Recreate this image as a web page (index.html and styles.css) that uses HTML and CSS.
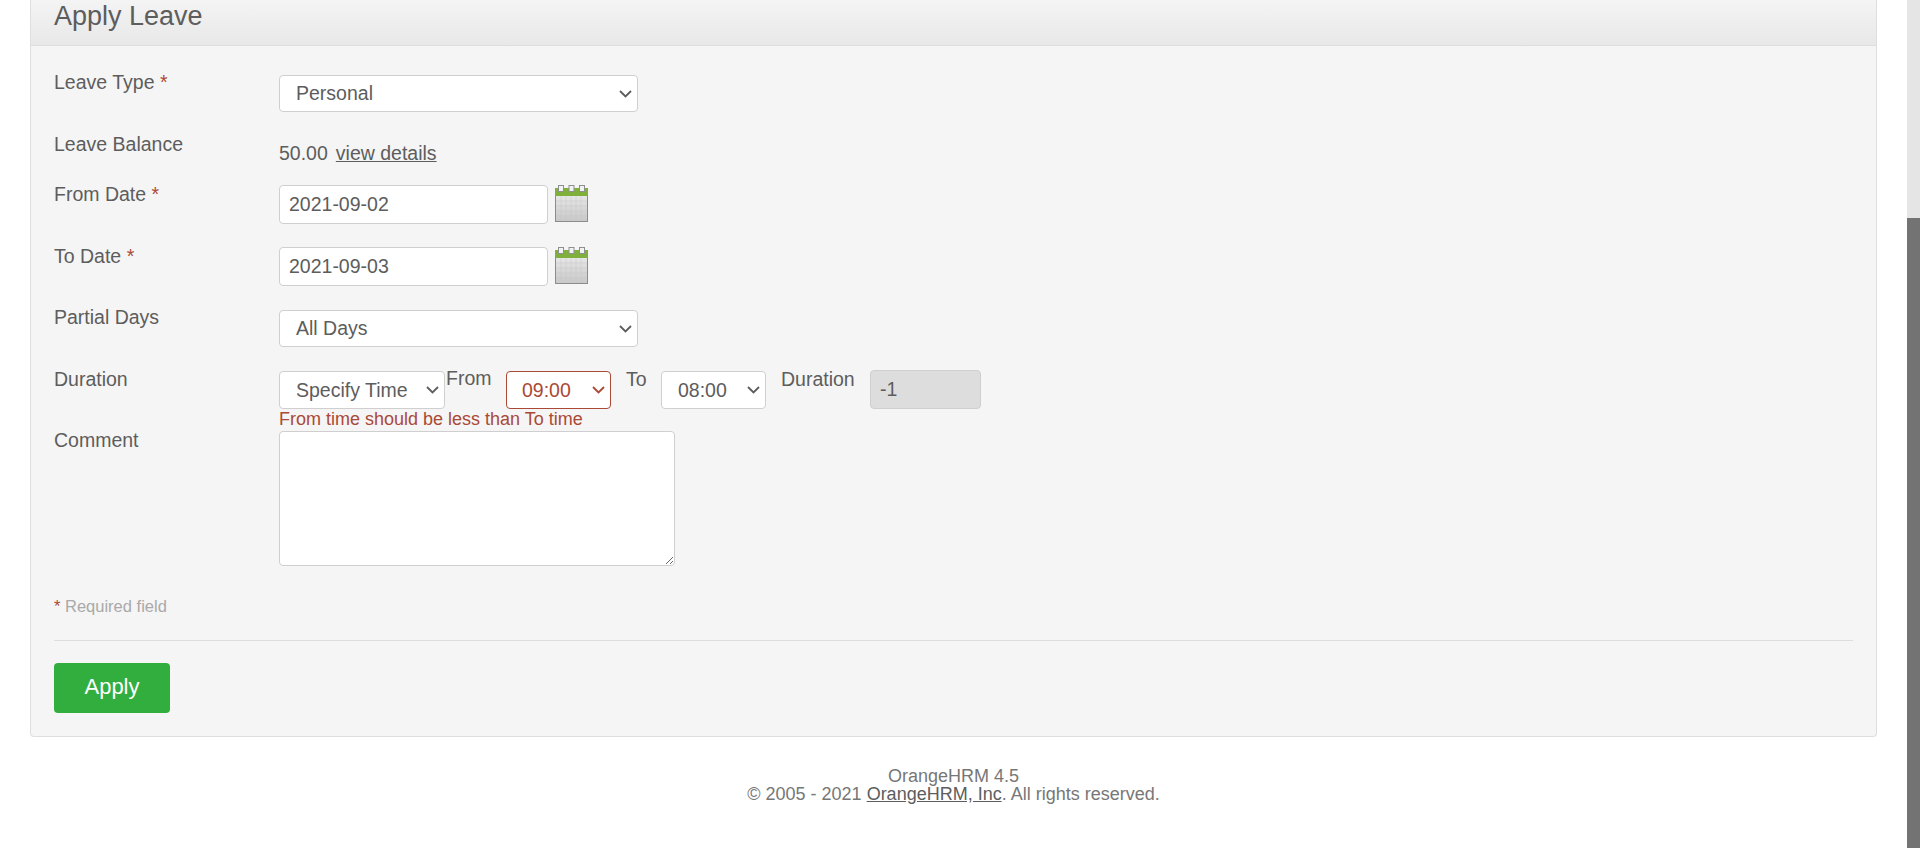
FILE: index.html
```html
<!DOCTYPE html>
<html>
<head>
	<meta charset="UTF-8">
	<title>Apply Leave</title>
	<link rel="stylesheet" href="styles.css">
</head>
<body>
	<div class="page">
		<div class="content">
			<div class="card">
				<div class="card-head">
					<h1>Apply Leave</h1>
				</div>
				<form class="card-body">
					<div class="form-grid">
						<label class="field-label">Leave Type <em>*</em></label>
						<div class="control control-select">
							<select class="input wide">
								<option>Personal</option>
							</select>
						</div>

						<label class="field-label">Leave Balance</label>
						<div class="control control-balance">
							<span class="balance">50.00</span>
							<a href="#" class="link">view details</a>
						</div>

						<label class="field-label">From Date <em>*</em></label>
						<div class="control control-date">
							<input class="input date" type="text" value="2021-09-02">
							<svg class="cal" viewBox="0 0 33 37">
								<defs>
									<linearGradient id="calBody" x1="0" y1="0" x2="0" y2="1">
										<stop offset="0" stop-color="#efefef"/>
										<stop offset="1" stop-color="#c8c8c8"/>
									</linearGradient>
								</defs>
								<rect x="0.5" y="3.5" width="32" height="33" fill="url(#calBody)" stroke="#8c8c8c"/>
								<rect x="0" y="3" width="33" height="8" fill="#7fb03c"/>
								<path d="M1 16h31M1 21h31M1 26h31M1 31h31M6 11v25M11 11v25M16 11v25M21 11v25M26 11v25" stroke="#c4c4c4" stroke-opacity="0.45" fill="none"/>
								<rect x="3.5" y="0.5" width="5" height="6" fill="#f2f2f2" stroke="#8f8f8f"/>
								<rect x="14" y="0.5" width="5" height="6" fill="#f2f2f2" stroke="#8f8f8f"/>
								<rect x="24.5" y="0.5" width="5" height="6" fill="#f2f2f2" stroke="#8f8f8f"/>
							</svg>
						</div>

						<label class="field-label">To Date <em>*</em></label>
						<div class="control control-date">
							<input class="input date" type="text" value="2021-09-03">
							<svg class="cal" viewBox="0 0 33 37">
								<rect x="0.5" y="3.5" width="32" height="33" fill="url(#calBody)" stroke="#8c8c8c"/>
								<rect x="0" y="3" width="33" height="8" fill="#7fb03c"/>
								<path d="M1 16h31M1 21h31M1 26h31M1 31h31M6 11v25M11 11v25M16 11v25M21 11v25M26 11v25" stroke="#c4c4c4" stroke-opacity="0.45" fill="none"/>
								<rect x="3.5" y="0.5" width="5" height="6" fill="#f2f2f2" stroke="#8f8f8f"/>
								<rect x="14" y="0.5" width="5" height="6" fill="#f2f2f2" stroke="#8f8f8f"/>
								<rect x="24.5" y="0.5" width="5" height="6" fill="#f2f2f2" stroke="#8f8f8f"/>
							</svg>
						</div>

						<label class="field-label">Partial Days</label>
						<div class="control control-select">
							<select class="input wide">
								<option>All Days</option>
							</select>
						</div>

						<label class="field-label">Duration</label>
						<div class="control">
							<div class="duration-row">
								<select class="input duration-type">
									<option>Specify Time</option>
								</select>
								<span class="inline-label from-label">From</span>
								<select class="input time time-bad">
									<option>09:00</option>
								</select>
								<span class="inline-label to-label">To</span>
								<select class="input time">
									<option>08:00</option>
								</select>
								<span class="inline-label total-label">Duration</span>
								<input class="input total" type="text" value="-1" readonly>
							</div>
							<div class="error">From time should be less than To time</div>
						</div>

						<label class="field-label">Comment</label>
						<div class="control control-comment">
							<textarea class="input comment"></textarea>
						</div>
					</div>

					<p class="required"><em>*</em> Required field</p>
					<hr class="divider">
					<button type="button" class="apply">Apply</button>
				</form>
			</div>

			<div class="footer">
				<div>OrangeHRM 4.5</div>
				<div>© 2005 - 2021 <a href="#" class="link">OrangeHRM, Inc</a>. All rights reserved.</div>
			</div>
		</div>

		<div class="scrollbar">
			<div class="scrollbar-thumb"></div>
		</div>
	</div>
</body>
</html>
```

FILE: styles.css
```css
html, body { margin: 0; height: 100%; overflow: hidden; background: #fff; }
body { font-family: "Liberation Sans", Arial, sans-serif; font-size: 19.5px; color: #5d5d5d; }

.page { display: flex; height: 848px; }
.content { flex: 1; padding: 0 30px; min-width: 0; }

.scrollbar { width: 13px; background: #e5e5e5; padding-top: 218px; box-sizing: border-box; }
.scrollbar-thumb { height: 100%; background: #737373; }

.card { background: #f5f5f5; border: 1px solid #dedede; border-top: 0; border-radius: 0 0 4px 4px; }
.card-head { height: 46px; box-sizing: border-box; padding: 0 23px; background: linear-gradient(#f4f4f4, #e8e8e8); border-bottom: 1px solid #dedede; }
.card-head h1 { margin: 0; font-size: 27px; font-weight: normal; line-height: 32px; color: #5d5d5d; }
.card-body { padding: 25px 23px 23px; }

.form-grid { display: grid; grid-template-columns: 225px 1fr; grid-template-rows: 62px 50px 62px 61px 62px 61px auto; }
.field-label { line-height: 22px; }
.field-label em, .required em { font-style: normal; color: #aa4935; }

.input { box-sizing: border-box; font-family: inherit; font-size: 19.5px; color: #5d5d5d; background-color: #fff; border: 1px solid #cfcfcf; border-radius: 4px; margin: 0; }
select.input {
	appearance: none;
	padding: 0 24px 0 16px;
	background-image: url("data:image/svg+xml,%3Csvg xmlns='http://www.w3.org/2000/svg' width='13' height='8'%3E%3Cpath d='M1 1l5.5 5.5L12 1' fill='none' stroke='%235d5d5d' stroke-width='1.8'/%3E%3C/svg%3E");
	background-repeat: no-repeat;
	background-position: right 5px center;
}
input.input { padding: 0 9px; }

.control-select { padding-top: 4px; }
.control-date { padding-top: 2px; display: flex; align-items: flex-start; gap: 8px; }
.control-balance { padding-top: 9px; line-height: 22px; display: flex; gap: 8px; }
.control-comment { padding-top: 2px; }

select.wide { width: 359px; height: 37px; padding-bottom: 2px; }
.date { width: 269px; height: 39px; }
.cal { width: 33px; height: 37px; margin-left: -1px; }
.link { color: #5d5d5d; text-decoration: underline; }

.duration-row { display: flex; align-items: flex-start; padding-top: 2px; height: 39px; box-sizing: border-box; }
.duration-row select { margin-top: 1px; height: 38px; }
.inline-label { line-height: 22px; margin-top: -2px; }
.duration-type { width: 166px; }
.from-label { margin-top: -3px; margin-left: 1px; width: 60px; }
.time { width: 105px; }
select.time-bad { padding-left: 15px; border-color: #aa4935; color: #aa4935; background-image: url("data:image/svg+xml,%3Csvg xmlns='http://www.w3.org/2000/svg' width='13' height='8'%3E%3Cpath d='M1 1l5.5 5.5L12 1' fill='none' stroke='%23aa4935' stroke-width='1.8'/%3E%3C/svg%3E"); }
.to-label { margin-left: 15px; width: 35px; }
.total-label { margin-left: 15px; width: 89px; }
.total { width: 111px; height: 39px; background-color: #ddd; }

.error { color: #aa4935; font-size: 18px; line-height: 20px; padding-top: 2px; }
.comment { display: block; width: 396px; height: 135px; }

.required { margin: 30px 0 0; font-size: 16.5px; line-height: 20px; color: #a9a9a9; }
.divider { border: 0; border-top: 1px solid #dedede; margin: 24px 0 22px; }
.apply { display: block; width: 116px; height: 50px; padding: 0 0 2px; background: #32ae3f; color: #fff; border: 0; border-radius: 4px; font-family: inherit; font-size: 22px; }

.footer { margin-top: 30px; text-align: center; font-size: 18px; line-height: 18px; color: #777; }
```
